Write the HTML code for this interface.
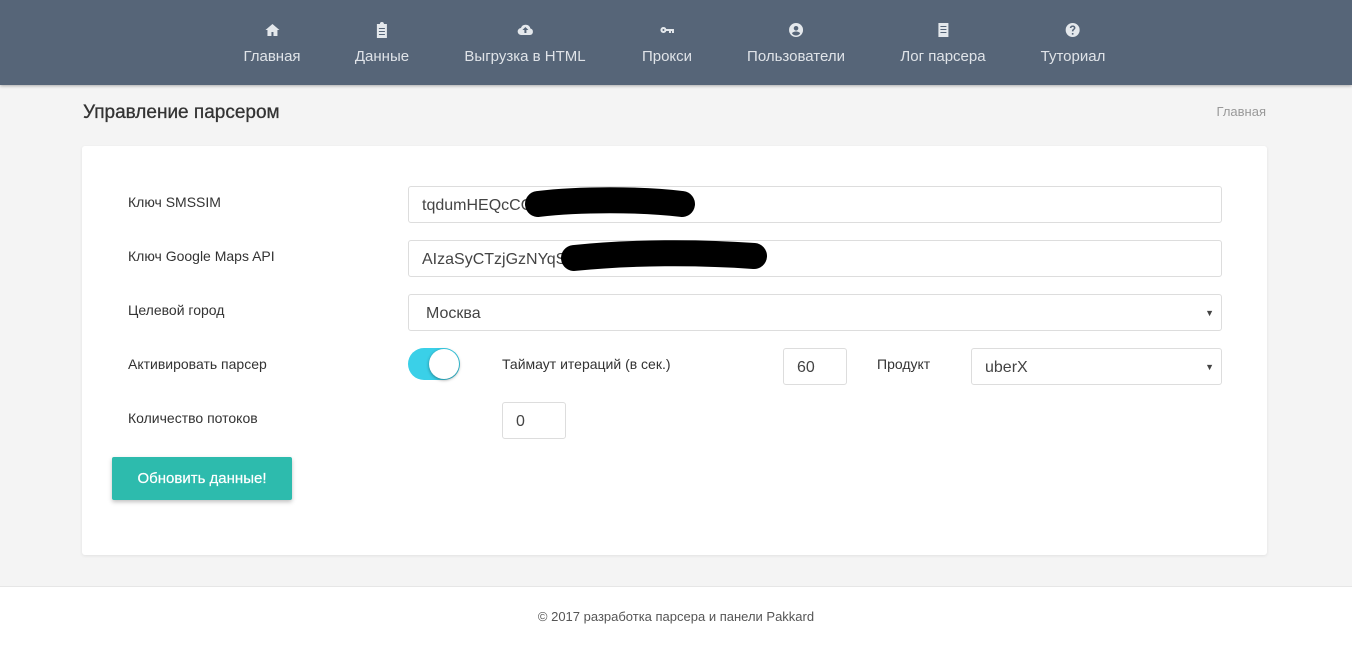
<!DOCTYPE html>
<html><head><meta charset="utf-8"><style>
*{margin:0;padding:0;box-sizing:border-box}
html,body{width:1352px;height:634px}
body{background:#f4f4f4;font-family:"Liberation Sans",Arial,sans-serif;position:relative;overflow:hidden;color:#333}
.nav{position:absolute;left:0;top:0;width:1352px;height:85px;background:#566578;box-shadow:0 1px 3px rgba(0,0,0,.3)}
.ni{position:absolute;top:22px;text-align:center;color:#dfe3e8;font-size:15px;transform:translateX(-50%);white-space:nowrap;line-height:18px}
.ni svg{display:block;margin:0 auto 10px;width:16px;height:16px;fill:#e4e8ec}
.abs{position:absolute}
.card{position:absolute;left:82px;top:146px;width:1185px;height:409px;background:#fff;border-radius:3px;box-shadow:0 1px 3px rgba(0,0,0,.08)}
.lbl{position:absolute;left:128px;font-size:14px;color:#333}
.inp{position:absolute;background:#fff;border:1px solid #ddd;border-radius:3px;font-size:16px;color:#444;padding-left:13px;line-height:37px;height:37px}
.caret{position:absolute;right:7px;top:0;font-size:9px;color:#444}
.footer{position:absolute;left:0;top:586px;width:1352px;height:60px;background:#fff;border-top:1px solid #e6e6e6;text-align:center;font-size:13px;color:#555;padding-top:22px}
</style></head><body>
<div class="nav">
<div class="ni" style="left:272px"><svg viewBox="0 0 16 16"><path d="M8 2 1 8h2v6h4v-4h2v4h4V8h2z"/></svg>Главная</div>
<div class="ni" style="left:382px"><svg viewBox="0 0 16 16"><path d="M3 2h3a2 2 0 0 1 4 0h3v14H3zM5 6h6v1H5zm0 3h6v1H5zm0 3h6v1H5z" fill-rule="evenodd"/></svg>Данные</div>
<div class="ni" style="left:525px"><svg viewBox="0 0 16 16"><path d="M4 13a3.5 3.5 0 0 1-.5-7A5 5 0 0 1 13 6.5 3.3 3.3 0 0 1 12.5 13zM8 5 5 8h2v3h2V8h2z" fill-rule="evenodd"/></svg>Выгрузка в HTML</div>
<div class="ni" style="left:667px"><svg viewBox="0 0 16 16"><path d="M4.5 5a3 3 0 1 0 2.8 4H10v2h2V9h1v2h2V7H7.3A3 3 0 0 0 4.5 5zm0 2a1 1 0 1 1 0 2 1 1 0 0 1 0-2z" fill-rule="evenodd"/></svg>Прокси</div>
<div class="ni" style="left:796px"><svg viewBox="0 0 16 16"><path d="M8 1a7 7 0 1 0 0 14A7 7 0 0 0 8 1zm0 3a2.3 2.3 0 1 1 0 4.6A2.3 2.3 0 0 1 8 4zm0 9.5a5 5 0 0 1-4-2c0-1.3 2.7-2 4-2s4 .7 4 2a5 5 0 0 1-4 2z" fill-rule="evenodd"/></svg>Пользователи</div>
<div class="ni" style="left:943px"><svg viewBox="0 0 16 16"><path d="M3 1h10v14H3zM5 4h6v1H5zm0 3h6v1H5zm0 3h6v1H5z" fill-rule="evenodd"/></svg>Лог парсера</div>
<div class="ni" style="left:1073px"><svg viewBox="0 0 16 16"><path d="M8 1a7 7 0 1 0 0 14A7 7 0 0 0 8 1zm-.8 10h1.6v1.6H7.2zM8 3.5c1.7 0 2.8 1 2.8 2.3 0 1.8-2 1.9-2 3.6H7.2c0-2.3 2-2.4 2-3.5 0-.6-.5-1-1.2-1s-1.2.4-1.2 1.100H5.2C5.2 4.5 6.4 3.5 8 3.5z" fill-rule="evenodd"/></svg>Туториал</div>
</div>
<div class="abs" style="left:83px;top:102px;font-size:19px;color:#333;-webkit-text-stroke:.3px #333">Управление парсером</div>
<div class="abs" style="right:86px;top:104px;font-size:13px;color:#999">Главная</div>
<div class="card"></div>
<div class="lbl" style="top:194px">Ключ SMSSIM</div>
<div class="lbl" style="top:248px">Ключ Google Maps API</div>
<div class="lbl" style="top:302px">Целевой город</div>
<div class="lbl" style="top:356px">Активировать парсер</div>
<div class="lbl" style="top:410px">Количество потоков</div>
<div class="inp" style="left:408px;top:186px;width:814px">tqdumHEQcCO</div>
<div class="inp" style="left:408px;top:240px;width:814px">AIzaSyCTzjGzNYqS</div>
<svg class="abs" style="left:0;top:0" width="1352" height="634"><path d="M538 204 C580 199 640 199 682 204" stroke="#000" stroke-width="26" stroke-linecap="round" fill="none"/><path d="M574 258 C630 252 700 252 754 256" stroke="#000" stroke-width="26" stroke-linecap="round" fill="none"/></svg>
<div class="inp" style="left:408px;top:294px;width:814px;padding-left:17px">Москва<span class="caret">▼</span></div>
<div class="abs" style="left:408px;top:348px;width:52px;height:32px;border-radius:16px;background:#3ad0e8"></div>
<div class="abs" style="left:429px;top:349px;width:30px;height:30px;border-radius:50%;background:#fff;box-shadow:0 1px 3px rgba(0,0,0,.4)"></div>
<div class="abs" style="left:502px;top:356px;font-size:14px">Таймаут итераций (в сек.)</div>
<div class="inp" style="left:783px;top:348px;width:64px">60</div>
<div class="abs" style="left:877px;top:356px;font-size:14px">Продукт</div>
<div class="inp" style="left:971px;top:348px;width:251px">uberX<span class="caret">▼</span></div>
<div class="inp" style="left:502px;top:402px;width:64px">0</div>
<div class="abs" style="left:112px;top:457px;width:180px;height:43px;background:#2dbbad;border-radius:2px;box-shadow:0 2px 4px rgba(0,0,0,.25);color:#fff;font-size:15px;text-align:center;line-height:43px;-webkit-text-stroke:.2px #fff">Обновить данные!</div>
<div class="footer">© 2017 разработка парсера и панели Pakkard</div>
</body></html>
